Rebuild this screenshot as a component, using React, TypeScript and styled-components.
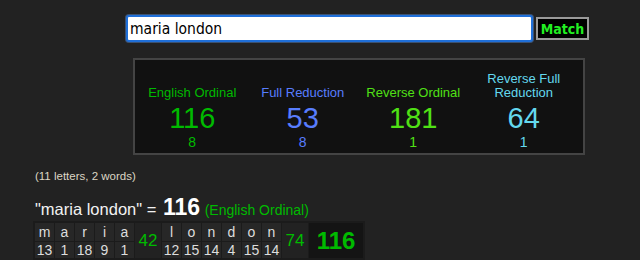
import styled, { createGlobalStyle } from "styled-components";

const GlobalStyle = createGlobalStyle`
  html, body {
    margin: 0;
    padding: 0;
    background: #222;
  }
  body {
    font-family: "Liberation Sans", Arial, sans-serif;
    color: #eee;
  }
`;

const Page = styled.div`
  padding-top: 15px;
`;

const SearchRow = styled.form`
  display: flex;
  align-items: center;
  gap: 3px;
  margin-left: 126px;
`;

const SearchInput = styled.input`
  box-sizing: border-box;
  width: 407px;
  height: 27px;
  padding: 0 2px;
  border: 2px solid #1f6fd8;
  border-radius: 3px;
  box-shadow: 0 0 0 1px rgba(90, 140, 210, 0.45);
  outline: none;
  background: #fff;
  color: #000;
  font-family: "DejaVu Sans Condensed", "DejaVu Sans", sans-serif;
  font-size: 15.5px;
`;

const MatchButton = styled.button`
  box-sizing: border-box;
  width: 53px;
  height: 23px;
  padding: 0;
  border: 2px solid #9a9a9a;
  background: #000;
  color: #22ee22;
  font-family: "DejaVu Sans Condensed", "DejaVu Sans", sans-serif;
  font-weight: bold;
  font-size: 14px;
`;

const Panel = styled.div`
  box-sizing: border-box;
  width: 452px;
  margin: 16px 0 0 133px;
  padding: 12px 4px 5px 2px;
  border: 2px solid #444;
  background: #111;
  display: grid;
  grid-template-columns: repeat(4, 1fr);
  align-items: end;
`;

const Cipher = styled.div<{ $color: string }>`
  display: flex;
  flex-direction: column;
  align-items: center;
  text-align: center;
  color: ${(p) => p.$color};
`;

const CipherName = styled.div`
  font-size: 13px;
  line-height: 14px;
  max-width: 96px;
`;

const CipherValue = styled.div`
  font-size: 29px;
  line-height: 36px;
`;

const CipherReduced = styled.div`
  font-size: 14px;
  line-height: 12px;
`;

const Counts = styled.div`
  margin: 14px 0 0 35px;
  font-size: 11.5px;
  line-height: 14px;
  color: #dcd6c4;
`;

const Heading = styled.div`
  margin: 12px 0 0 35px;
  font-size: 16.5px;
  line-height: 24px;
  height: 24px;
  color: #f2f2f2;
`;

const HeadingTotal = styled.b`
  margin-left: 2px;
  font-size: 23px;
  color: #fff;
`;

const HeadingCipher = styled.span`
  font-size: 14px;
  color: #00ba00;
`;

const Breakdown = styled.table`
  margin: 2px 0 0 33px;
  padding: 1px;
  border-collapse: separate;
  border-spacing: 1px;
  background: #1b1b1b;
`;

const LetterCell = styled.td<{ $row: "letter" | "number" }>`
  width: 19px;
  padding: 0;
  text-align: center;
  background: #272727;
  color: #ddd;
  font-size: 14px;
  height: ${(p) => (p.$row === "letter" ? 18 : 16)}px;
  line-height: ${(p) => (p.$row === "letter" ? 18 : 16)}px;
`;

const SumCell = styled.td`
  width: 26px;
  padding: 0;
  text-align: center;
  background: #222;
  color: #00ba00;
  font-size: 17px;
`;

const TotalCell = styled.td`
  width: 54px;
  padding: 0;
  text-align: center;
  background: #141414;
  color: #00ba00;
  font-size: 24px;
  font-weight: bold;
`;

const ciphers = [
  { name: "English Ordinal", value: 116, reduced: 8, color: "#00ba00" },
  { name: "Full Reduction", value: 53, reduced: 8, color: "#587dfe" },
  { name: "Reverse Ordinal", value: 181, reduced: 1, color: "#50e015" },
  { name: "Reverse Full Reduction", value: 64, reduced: 1, color: "#64d8ee" },
];

const words = [
  { letters: [["m", 13], ["a", 1], ["r", 18], ["i", 9], ["a", 1]] as [string, number][], sum: 42 },
  {
    letters: [["l", 12], ["o", 15], ["n", 14], ["d", 4], ["o", 15], ["n", 14]] as [string, number][],
    sum: 74,
  },
];

export default function App() {
  return (
    <Page>
      <GlobalStyle />
      <SearchRow onSubmit={(e) => e.preventDefault()}>
        <SearchInput defaultValue="maria london" />
        <MatchButton type="submit">Match</MatchButton>
      </SearchRow>

      <Panel>
        {ciphers.map((c) => (
          <Cipher key={c.name} $color={c.color}>
            <CipherName>{c.name}</CipherName>
            <CipherValue>{c.value}</CipherValue>
            <CipherReduced>{c.reduced}</CipherReduced>
          </Cipher>
        ))}
      </Panel>

      <Counts>(11 letters, 2 words)</Counts>
      <Heading>
        "maria london" = <HeadingTotal>116</HeadingTotal> <HeadingCipher>(English Ordinal)</HeadingCipher>
      </Heading>

      <Breakdown>
        <tbody>
          <tr>
            {words.map((w, wi) => [
              ...w.letters.map(([ch], i) => (
                <LetterCell key={`l${wi}-${i}`} $row="letter">
                  {ch}
                </LetterCell>
              )),
              <SumCell key={`s${wi}`} rowSpan={2}>
                {w.sum}
              </SumCell>,
            ])}
            <TotalCell rowSpan={2}>116</TotalCell>
          </tr>
          <tr>
            {words.map((w, wi) =>
              w.letters.map(([, n], i) => (
                <LetterCell key={`n${wi}-${i}`} $row="number">
                  {n}
                </LetterCell>
              ))
            )}
          </tr>
        </tbody>
      </Breakdown>
    </Page>
  );
}
